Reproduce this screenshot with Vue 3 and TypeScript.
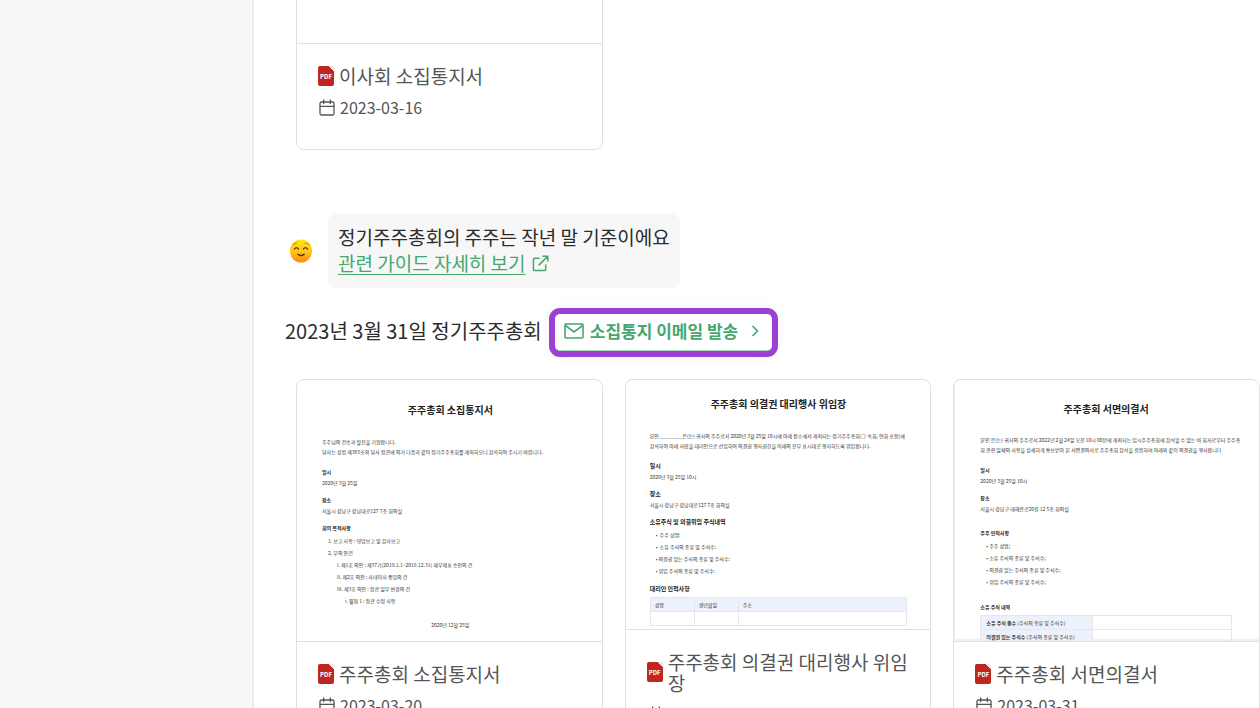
<script setup lang="ts">
interface Line {
  text: string
  kind: string
}
interface MeetingDoc {
  id: string
  title: string
  date: string
  heading: string
  lines: Line[]
}

const line = (kind: string, text: string): Line => ({ kind, text })

const docs: MeetingDoc[] = [
  {
    id: 'notice',
    title: '주주총회 소집통지서',
    date: '2023-03-20',
    heading: '주주총회 소집통지서',
    lines: [
      line('lead', '주주님의 건승과 발전을 기원합니다.'),
      line('para', '당사는 상법 제365조와 당사 정관에 의거 다음과 같이 정기주주총회를 개최하오니 참석하여 주시기 바랍니다.'),
      line('label first', '일시'),
      line('value', '2020년 3월 25일'),
      line('label', '장소'),
      line('value', '서울시 강남구 강남대로127 7층 회의실'),
      line('label', '회의 목적사항'),
      line('item top', '1. 보고 사항 : 영업보고 및 감사보고'),
      line('item', '2. 부의 안건'),
      line('item sub', 'I. 제1호 의안 : 제37기(2019.1.1~2019.12.31) 재무제표 승인의 건'),
      line('item sub', 'II. 제2호 의안 : 사내이사 중임의 건'),
      line('item sub', 'III. 제3호 의안 : 정관 일부 변경의 건'),
      line('item deep', 'i. 별첨 1 : 정관 수정 사항'),
      line('signed', '2020년 12월 25일'),
    ],
  },
  {
    id: 'proxy',
    title: '주주총회 의결권 대리행사 위임장',
    date: '2023-03-31',
    heading: '주주총회 의결권 대리행사 위임장',
    lines: [
      line('lead', '본인 ________은(는) 귀사의 주주로서 2020년 3월 25일 10시에 아래 장소에서 개최되는 정기주주총회(그 속회, 연회 포함)에'),
      line('para', '참석하여 아래 사람을 대리인으로 선임하여 의결권 행사권한을 이래의 찬부 표시대로 행사하도록 위임합니다.'),
      line('label first', '일시'),
      line('value', '2020년 3월 25일 10시'),
      line('label', '장소'),
      line('value', '서울시 강남구 강남대로127 7층 회의실'),
      line('label', '소유주식 및 의결위임 주식내역'),
      line('item top', '•  주주 성명:'),
      line('item', '•  소유 주식의 종류 및 주식수:'),
      line('item', '• 의결권 있는 주식의 종류 및 주식수:'),
      line('item', '• 위임 주식의 종류 및 주식수:'),
      line('label', '대리인 인적사항'),
    ],
  },
  {
    id: 'ballot',
    title: '주주총회 서면의결서',
    date: '2023-03-31',
    heading: '주주총회 서면의결서',
    lines: [
      line('lead', '본인 은(는) 귀사의 주주로서 2022년 2월 24일 오전 10시 00분에 개최되는 임시주주총회에 참석할 수 없는 바 회사로부터 주주총'),
      line('para', '회 관련 일체의 사항을 상세하게 통보받아 본 서면결의서로 주주총회 참석을 갈음하며 아래와 같이 의결권을 행사합니다'),
      line('label first', '일시'),
      line('value', '2020년 3월 25일 10시'),
      line('label', '장소'),
      line('value', '서울시 강남구 테헤란로20길 12 5층 회의실'),
      line('label spaced', '주주 인적사항'),
      line('item top', '• 주주 성명;'),
      line('item', '• 소유 주식의 종류 및 주식수;'),
      line('item', '• 의결권 있는 주식의 종류 및 주식수;'),
      line('item', '• 위임 주식의 종류 및 주식수;'),
      line('label spaced', '소유 주식 내역'),
    ],
  },
]
</script>

<template>
  <div class="page">
    <svg class="defs" aria-hidden="true">
      <symbol id="calendar" viewBox="0 0 16 17">
        <g fill="none" stroke="#555" stroke-width="1.300" stroke-linecap="round">
          <rect x="1" y="3" width="14" height="13" rx="1.500" />
          <path d="M1 7.300H15M4.700 1V4.500M11.300 1V4.500" />
        </g>
      </symbol>
    </svg>

    <aside class="sidebar"></aside>

    <main class="content">
      <div class="cards">
        <article class="card scrolled">
          <div class="preview"></div>
          <div class="info">
            <h3 class="name">
              <i class="pdf">PDF</i>
              <span>이사회 소집통지서</span>
            </h3>
            <p class="date">
              <svg class="cal" aria-hidden="true"><use href="#calendar" /></svg>
              <time>2023-03-16</time>
            </p>
          </div>
        </article>
      </div>

      <section class="tip">
        <svg class="emoji" viewBox="0 0 24 24" role="img" aria-label="미소">
          <defs>
            <linearGradient id="face" x1="0" y1="0" x2="0" y2="1">
              <stop offset="0" stop-color="#ffe514" />
              <stop offset=".55" stop-color="#ffc414" />
              <stop offset="1" stop-color="#ff8417" />
            </linearGradient>
          </defs>
          <ellipse cx="12" cy="12" rx="11" ry="11.500" fill="url(#face)" />
          <g fill="none" stroke-linecap="round">
            <path d="M4 6Q5.500 3.800 8 4M16 4Q18.500 3.800 20 6" stroke="#d58b12" stroke-width="1.100" />
            <path d="M5.500 10Q7.500 7.300 9.500 10M14.500 10Q16.500 7.300 18.500 10" stroke="#5b3512" stroke-width="1.300" />
            <path d="M9 15.300Q12 17.800 15 15.300" stroke="#5b3512" stroke-width="1.500" />
          </g>
        </svg>
        <div class="bubble">
          <p>정기주주총회의 주주는 작년 말 기준이에요</p>
          <a href="#guide">
            <span>관련 가이드 자세히 보기</span>
            <svg viewBox="0 0 18 18" aria-hidden="true">
              <path d="M8 3.500H3Q1.500 3.500 1.500 5V15Q1.500 16.500 3 16.500H13Q14.500 16.500 14.500 15V10M11 1.200H16.700V6.900M16.500 1.500L7 11" />
            </svg>
          </a>
        </div>
      </section>

      <header class="meeting">
        <h2>2023년 3월 31일 정기주주총회</h2>
        <div class="highlight">
          <button type="button" class="send">
            <svg class="mail" viewBox="0 0 20 16" aria-hidden="true">
              <rect x="1" y="1" width="18" height="14" rx="1" />
              <path d="M1.500 2.500L10 9L18.500 2.500" />
            </svg>
            <span>소집통지 이메일 발송</span>
            <svg class="chevron" viewBox="0 0 8 12" aria-hidden="true">
              <path d="M1.500 1L6.500 6L1.500 11" />
            </svg>
          </button>
        </div>
      </header>

      <div class="cards">
        <article v-for="doc in docs" :key="doc.id" class="card" :class="doc.id">
          <div class="preview">
            <h4>{{ doc.heading }}</h4>
            <p v-for="(row, i) in doc.lines" :key="i" :class="row.kind">{{ row.text }}</p>
            <table v-if="doc.id === 'proxy'">
              <thead>
                <tr><th class="narrow">성명</th><th class="narrow">생년월일</th><th>주소</th></tr>
              </thead>
              <tbody>
                <tr><td></td><td></td><td></td></tr>
              </tbody>
            </table>
            <table v-if="doc.id === 'ballot'">
              <tbody>
                <tr><th scope="row"><b>소유 주식 총수</b> (주식의 종류 및 주식수)</th><td></td></tr>
                <tr><th scope="row"><b>의결권 있는 주식수</b> (주식의 종류 및 주식수)</th><td></td></tr>
              </tbody>
            </table>
          </div>
          <div class="info">
            <h3 class="name">
              <i class="pdf">PDF</i>
              <span>{{ doc.title }}</span>
            </h3>
            <p class="date">
              <svg class="cal" aria-hidden="true"><use href="#calendar" /></svg>
              <time>{{ doc.date }}</time>
            </p>
          </div>
        </article>
      </div>
    </main>
  </div>
</template>

<style>
body {
  margin: 0;
  background: #fff;
}
</style>

<style scoped>
* {
  box-sizing: border-box;
}
h2, h3, h4, p {
  margin: 0;
  font-weight: 400;
}
svg {
  display: block;
  flex: none;
}
.page {
  display: flex;
  height: 100vh;
  overflow: hidden;
  color: #2b2b2b;
  font-family: "Noto Sans CJK KR", "Noto Sans", sans-serif;
}
.defs {
  position: absolute;
  width: 0;
  height: 0;
}
.sidebar {
  flex: none;
  width: 254px;
  background: #f7f7f7;
  border-right: 2px solid #ebebeb;
}
.content {
  flex: 1;
  min-width: 0;
}
.cards {
  display: grid;
  grid-template-columns: repeat(3, minmax(0, 1fr));
  column-gap: 22px;
  padding-left: 42px;
}
.card {
  display: flex;
  flex-direction: column;
  border: 1px solid #e0e0e0;
  border-radius: 8px;
  overflow: hidden;
}
.scrolled {
  border-top: 0;
  border-radius: 0 0 8px 8px;
}
.preview {
  height: 262px;
  overflow: hidden;
  padding: 22px 23px 0 25px;
  border-bottom: 1px solid #e0e0e0;
  color: #333;
  font-size: 5px;
  line-height: 10px;
  white-space: pre;
}
.scrolled .preview {
  height: 44px;
}
.proxy .preview {
  height: 250px;
  padding: 16px 23px 0 24px;
}
.ballot .preview {
  padding: 21px 27px 0 26px;
  box-shadow: inset 1px -2px 1px #f0f0f0;
}
.preview h4 {
  color: #222;
  font-size: 10px;
  line-height: 16px;
  font-weight: 700;
  text-align: center;
}
.preview .lead {
  margin-top: 19px;
}
.ballot .lead {
  margin-top: 18px;
}
.preview .label {
  margin-top: 7px;
  color: #222;
  font-weight: 700;
}
.proxy .label {
  font-size: 6px;
}
.preview .first {
  margin-top: 10px;
}
.preview .spaced {
  margin-top: 14px;
}
.preview .value {
  margin: 1px 0 0;
}
.preview .item {
  padding-left: 6px;
  line-height: 12px;
}
.preview .top {
  margin-top: 2px;
}
.preview .sub {
  padding-left: 15px;
}
.preview .deep {
  padding-left: 23px;
}
.preview .signed {
  margin-top: 13px;
  text-align: center;
}
.preview table {
  width: 100%;
  margin-top: 3px;
  border-collapse: collapse;
  table-layout: fixed;
}
.preview th,
.preview td {
  height: 14px;
  padding: 0 4px;
  border: 1px solid #e5e7ec;
  font-weight: 400;
  text-align: left;
}
.preview th {
  background: #edf1fc;
}
.narrow {
  width: 44px;
}
.ballot th {
  width: 112px;
  padding-left: 5px;
}
.info {
  min-height: 105px;
  padding: 21px 21px 20px;
  color: #555;
}
.name {
  display: flex;
  align-items: center;
  gap: 5px;
  font-size: 19px;
  line-height: 21px;
}
.pdf {
  flex: none;
  width: 16px;
  height: 20px;
  border-radius: 2px;
  background: linear-gradient(45deg, #c0261f 84%, #f6e4e3 84%);
  color: #fff;
  font-size: 6px;
  line-height: 22px;
  font-style: normal;
  font-weight: 700;
  text-align: center;
}
.date {
  display: flex;
  align-items: center;
  gap: 5px;
  margin-top: 10px;
  padding-left: 1px;
  font-size: 16px;
  line-height: 22px;
}
.cal {
  width: 16px;
  height: 17px;
}
.tip {
  display: flex;
  align-items: center;
  gap: 15px;
  margin-top: 64px;
  padding-left: 35px;
}
.emoji {
  width: 24px;
  height: 24px;
}
.bubble {
  padding: 10px 10px 12px;
  border-radius: 8px;
  background: #f7f7f7;
  font-size: 19px;
  line-height: 26px;
}
.bubble a {
  display: flex;
  align-items: center;
  gap: 6px;
  color: #45a76f;
  text-decoration: none;
}
.bubble a span {
  text-decoration: underline;
  text-decoration-thickness: 1px;
  text-underline-offset: 3px;
}
.bubble a svg {
  width: 17px;
  height: 17px;
  fill: none;
  stroke: #45a76f;
  stroke-width: 1.6;
}
.meeting {
  display: flex;
  align-items: center;
  gap: 7px;
  margin: 20px 0 22px;
  padding-left: 31px;
}
.meeting h2 {
  padding-bottom: 4px;
  font-size: 20px;
  line-height: 28px;
}
.highlight {
  border: 6px solid #9b40d1;
  border-radius: 11px;
  background: #9b40d1;
  box-shadow: 0 0 12px #f2f4f3;
}
.send {
  display: flex;
  align-items: center;
  height: 37px;
  padding: 0 13px 2px 9px;
  border: 0;
  border-bottom: 1px solid #a9d8bd;
  border-radius: 5px;
  background: #fff;
  color: #45a76f;
  font: 700 17px/24px "Noto Sans CJK KR", "Noto Sans", sans-serif;
}
.send svg {
  fill: none;
  stroke: #45a76f;
  stroke-width: 1.6;
}
.mail {
  width: 20px;
  height: 16px;
  margin-right: 6px;
}
.chevron {
  width: 8px;
  height: 12px;
  margin-left: 13px;
}
</style>
